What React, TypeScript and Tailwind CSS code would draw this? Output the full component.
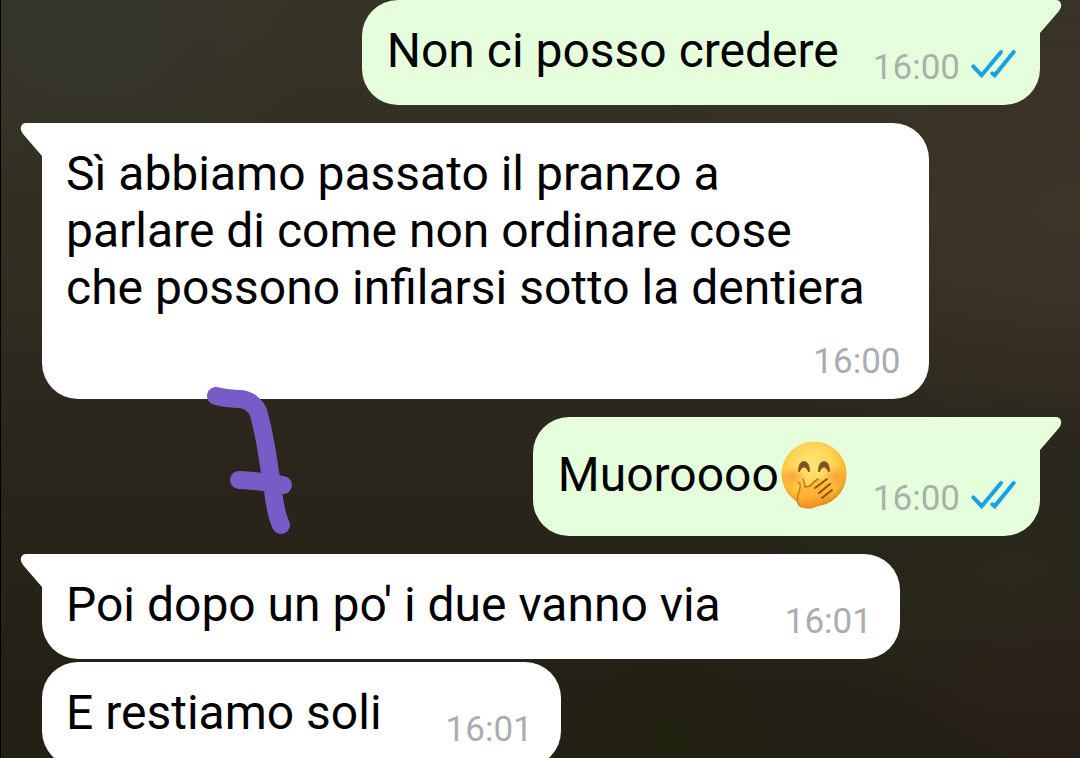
import type { ReactNode } from "react";

function Checks() {
  return (
    <svg role="img" aria-label="Letto" viewBox="0 0 138 90" className="mb-2.5 h-[30px] w-[46px] shrink-0" fill="none" stroke="#14a4e6" strokeWidth="12" strokeLinecap="round">
      <path d="M10 52 35 79 93 9" />
      <path d="M67 73 74 79 131 9" />
    </svg>
  );
}

function Tail({ sent }: { sent: boolean }) {
  return sent ? (
    <svg aria-hidden="true" viewBox="0 0 22 33" className="absolute top-0 left-full h-[33px] w-[22px]" fill="#e5ffdc">
      <path d="M-1 0H16Q20 0 21 4Q22 7 19 11L0 33H-1Z" />
    </svg>
  ) : (
    <svg aria-hidden="true" viewBox="0 0 22 33" className="absolute top-0 right-full h-[33px] w-[22px]" fill="#fff">
      <path d="M23 0H6Q2 0 1 4Q0 7 3 11L22 33H23Z" />
    </svg>
  );
}

function GiggleFace() {
  return (
    <svg role="img" aria-label="Faccina che ride con la mano sulla bocca" viewBox="0 0 66 68" className="h-[68px] w-[66px] shrink-0">
      <defs>
        <radialGradient id="face" cx="0.46" cy="0.36" r="0.62">
          <stop offset="0" stopColor="#ffe678" />
          <stop offset="0.55" stopColor="#fed452" />
          <stop offset="0.86" stopColor="#f8b62f" />
          <stop offset="1" stopColor="#dc9425" />
        </radialGradient>
        <radialGradient id="blush">
          <stop offset="0" stopColor="#fd8a35" stopOpacity="0.65" />
          <stop offset="1" stopColor="#fd8a35" stopOpacity="0" />
        </radialGradient>
        <linearGradient id="hand" x1="0" y1="0" x2="0.2" y2="1">
          <stop offset="0" stopColor="#fdc748" />
          <stop offset="0.6" stopColor="#fdb233" />
          <stop offset="1" stopColor="#f08c22" />
        </linearGradient>
      </defs>
      <circle cx="33" cy="33" r="32.5" fill="url(#face)" />
      <ellipse cx="12" cy="36" rx="13" ry="11" fill="url(#blush)" />
      <ellipse cx="54" cy="36" rx="13" ry="11" fill="url(#blush)" />
      <path d="M18 30C18 18 28 18 28 30C25 24 21 24 18 30ZM38 30C38 18 48 18 48 30C45 24 41 24 38 30Z" fill="#794d20" stroke="#855723" strokeWidth="2" strokeLinejoin="round" />
      <path d="M18 40Q22 36 24 44L25 46L36 38Q40 36 41 39Q45 37 47 40Q50 41 49 44Q52 46 50 49Q53 51 50 54L41 62Q32 70 22 67Q15 64 17 54L19 47Z" fill="url(#hand)" />
      <path d="M17 41Q20 42 19 47L17 54Q15 63 20 66" fill="none" stroke="#c9751c" strokeWidth="1.3" strokeLinecap="round" />
      <path d="M22 38Q24 42 24 46L29 45Q33 40 37 38" fill="none" stroke="#b9701d" strokeWidth="1.4" strokeLinecap="round" strokeLinejoin="round" />
      <path d="M46 38L34 47M49 43L38 52M51 49L41 57" fill="none" stroke="#8d5115" strokeWidth="2" strokeLinecap="round" />
    </svg>
  );
}

function Scribble() {
  return (
    <svg aria-hidden="true" viewBox="0 0 86 150" className="absolute top-[263px] left-[165px] z-10 h-[150px] w-[86px]" fill="none" stroke="#775bc7" strokeWidth="18" strokeLinecap="round" strokeLinejoin="round">
      <path d="M9 10Q22 13 33 13Q45 14 51 25Q56 42 60 67L66 105Q69 129 74 139" />
      <path d="M32 94Q54 95 76 99" />
    </svg>
  );
}

type MessageProps = {
  children: ReactNode;
  time: string;
  sent?: boolean;
  tail?: boolean;
  stacked?: boolean;
  emoji?: boolean;
  overlay?: ReactNode;
};

function Message({ children, time, sent = false, tail = true, stacked = false, emoji = false, overlay }: MessageProps) {
  return (
    <li className={`flex ${sent ? "justify-end" : "justify-start"} ${tail ? "" : "-mt-[15px]"}`}>
      <article
        className={`relative flex rounded-[36px] pt-[22px] pb-4 ${sent ? "bg-[#e5ffdc] pr-6 pl-[25px]" : "bg-white pr-7 pl-6"} ${
          tail ? (sent ? "rounded-tr-none" : "rounded-tl-none") : ""
        } ${stacked ? "flex-col" : `items-end ${sent ? (emoji ? "gap-[26px]" : "gap-[34px]") : "gap-16"}`}`}
      >
        {tail && <Tail sent={sent} />}
        <div className={`flex items-center whitespace-pre-line text-[48px] ${emoji ? "leading-[71px]" : "leading-[57px]"} ${stacked ? "pr-9" : "pb-2.5"}`}>
          {children}
        </div>
        <footer className={`flex items-end gap-2.5 text-[35px] leading-[42px] ${stacked ? "mt-[25px] self-end" : ""} ${sent ? "text-[#a8b2a9]" : "text-[#a9adb0]"}`}>
          <time>{time}</time>
          {sent && <Checks />}
        </footer>
        {overlay}
      </article>
    </li>
  );
}

export default function App() {
  return (
    <main className="h-screen overflow-hidden border-l border-black bg-[radial-gradient(ellipse_at_8%_4%,#34352a_0%,transparent_16%),radial-gradient(ellipse_at_100%_28%,#3d3528_0%,transparent_30%),radial-gradient(ellipse_at_98%_90%,#2b2219_0%,transparent_12%),radial-gradient(ellipse_at_94%_76%,#2a2a1c_0%,transparent_18%),radial-gradient(ellipse_at_62%_98%,#20210f_0%,transparent_10%),linear-gradient(180deg,#373226_0%,#322d21_35%,#29251b_62%,#231f14_100%)] font-['Roboto',sans-serif] text-black">
      <ol className="flex flex-col gap-[18px] pr-10 pl-[41px]">
        <Message sent time="16:00">Non ci posso credere</Message>
        <Message stacked time="16:00" overlay={<Scribble />}>
          {"Sì abbiamo passato il pranzo a\nparlare di come non ordinare cose\nche possono infilarsi sotto la dentiera"}
        </Message>
        <Message sent emoji time="16:00">
          <span>Muoroooo</span>
          <span className="ml-0.5">
            <GiggleFace />
          </span>
        </Message>
        <Message time="16:01">Poi dopo un po' i due vanno via</Message>
        <Message tail={false} time="16:01">E restiamo soli</Message>
      </ol>
    </main>
  );
}
